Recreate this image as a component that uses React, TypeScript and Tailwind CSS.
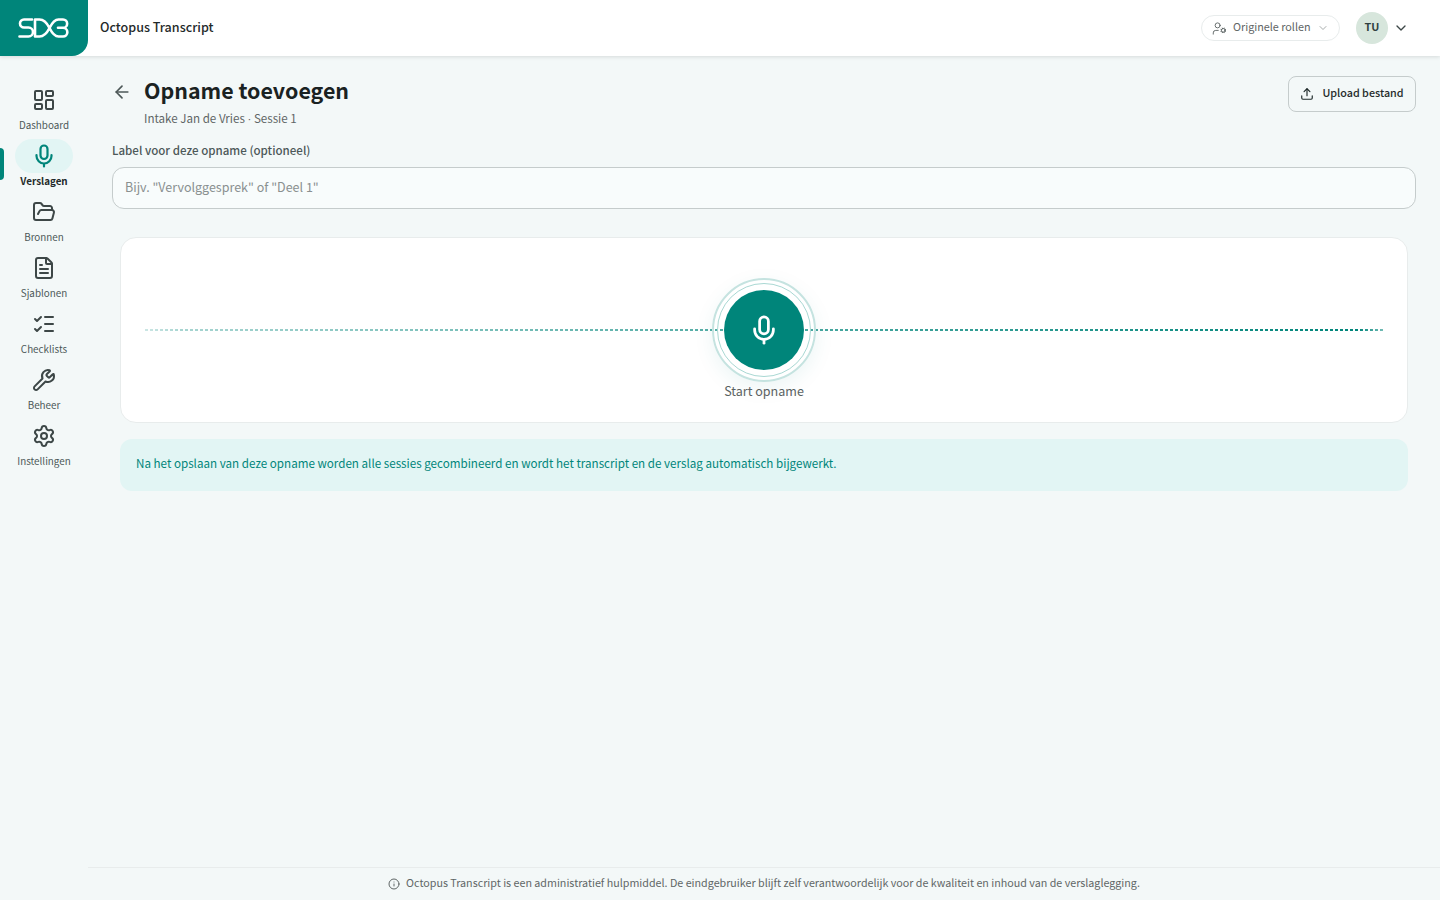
import {
  ArrowLeft,
  ChevronDown,
  FileText,
  FolderOpen,
  Info,
  LayoutDashboard,
  ListChecks,
  Settings,
  Upload,
  UserCog,
  Wrench,
} from "lucide-react";

function MicIcon({ size = 24, strokeWidth = 2.2 }: { size?: number; strokeWidth?: number }) {
  return (
    <svg width={size} height={size} viewBox="0 0 24 24" fill="none" stroke={"currentColor"} strokeWidth={strokeWidth} strokeLinecap="round" strokeLinejoin="round">
      <rect x="8.500" y="1.500" width="7" height="13.500" rx="3.500" />
      <path d="M4.500 11v1a7.500 7.500 0 0 0 15 0v-1" />
      <path d="M12 20v2.500" />
    </svg>
  );
}

const navItems = [
  { label: "Dashboard", icon: LayoutDashboard, stroke: 2 },
  { label: "Verslagen", icon: MicIcon, stroke: 2.2, active: true },
  { label: "Bronnen", icon: FolderOpen, stroke: 2 },
  { label: "Sjablonen", icon: FileText, stroke: 2 },
  { label: "Checklists", icon: ListChecks, stroke: 2 },
  { label: "Beheer", icon: Wrench, stroke: 2 },
  { label: "Instellingen", icon: Settings, stroke: 2 },
];

function Logo() {
  return (
    <svg width="52" height="22" viewBox="0 0 52 22" fill="none" stroke="white" strokeWidth="2.6" strokeLinecap="round" strokeLinejoin="round">
      <path d="M14 2.500H6a4 4 0 0 0 0 8h4.500a4.300 4.300 0 0 1 0 9H1.500" />
      <path d="M17 2.500v17h4.500c5 0 7.500-3.500 10-8.500s5-8.500 9-8.500h4.500a4 4 0 0 1 0 8.300h-5 5a4.300 4.300 0 0 1 0 8.700h-4.500c-4 0-6.500-3.500-9-8.500S26.500 2.500 21.500 2.500H17" />
    </svg>
  );
}

function Header() {
  return (
    <header className="relative z-10 flex h-14 items-center justify-between bg-white pr-[31px] shadow-[0_1px_4px_rgba(0,0,0,0.12)]">
      <div className="flex items-center">
        <div className="flex h-14 w-[88px] items-center justify-center rounded-br-2xl bg-[#00857a]">
          <Logo />
        </div>
        <span className="ml-3 pb-[2px] text-[12.55px] font-medium leading-4 text-[#1f2a2a]">Octopus Transcript</span>
      </div>
      <div className="flex items-center">
        <button className="flex h-[26px] w-[139px] items-center rounded-full border border-[#e8ecec] pl-[10px] text-[10.8px] leading-4 text-[#5f6666]">
          <UserCog size={15} strokeWidth={1.5} />
          <span className="ml-[6px] pb-[5px]">Originele rollen</span>
          <ChevronDown size={12} strokeWidth={1.5} className="ml-[6px] text-[#8a9090]" />
        </button>
        <div className="ml-4 flex h-8 w-8 items-center justify-center rounded-full bg-[#d7e6dc] pb-[3px] text-[10.8px] font-bold text-[#2f4040]">
          TU
        </div>
        <ChevronDown size={16} className="ml-[5px] text-[#3d4747]" />
      </div>
    </header>
  );
}

function Sidebar() {
  return (
    <aside className="relative flex w-[88px] shrink-0 flex-col items-center pt-[27px]">
      {navItems.map((item) => {
        const Icon = item.icon;
        return (
          <div key={item.label} className="relative flex h-14 w-[88px] flex-col items-center">
            {item.active && <div className="absolute left-0 top-[9px] h-8 w-1 rounded-r bg-[#00857a]" />}
            <div className={`flex h-[34px] w-[58px] items-center justify-center rounded-full ${item.active ? "bg-[#e2f5f4] text-[#00857a]" : "text-[#3d4747]"}`}>
              <Icon size={24} strokeWidth={item.stroke} />
            </div>
            <span className={`text-[9.85px] leading-[16px] ${item.active ? "font-bold text-[#1f2a2a]" : "text-[#4d5858]"}`}>
              {item.label}
            </span>
          </div>
        );
      })}
    </aside>
  );
}

function Recorder() {
  return (
    <section className="relative mx-2 mt-7 flex h-[186px] flex-col items-center rounded-2xl border border-[#e8ecec] bg-white pt-[40px]">
      <svg className="absolute left-6 top-[91px]" width="1238" height="2" viewBox="0 0 1238 2">
        <defs>
          <linearGradient id="wave" x1="0" x2="1" y1="0" y2="0">
            <stop offset="0" stopColor="#00857a" stopOpacity="0.2" />
            <stop offset="0.03" stopColor="#00857a" stopOpacity="0.35" />
            <stop offset="0.5" stopColor="#00857a" stopOpacity="0.7" />
            <stop offset="0.98" stopColor="#00857a" stopOpacity="1" />
            <stop offset="1" stopColor="#00857a" stopOpacity="0.55" />
          </linearGradient>
          <mask id="dots" maskUnits="userSpaceOnUse" x="0" y="0" width="1238" height="2">
            <line x1="0" y1="1" x2="1238" y2="1" stroke="white" strokeWidth="2" strokeDasharray="3 2" />
          </mask>
        </defs>
        <rect width="1238" height="2" fill="url(#wave)" mask="url(#dots)" />
      </svg>
      <div className="relative flex h-[104px] w-[104px] items-center justify-center rounded-full border-2 border-[#c5e3e0] shadow-[0_6px_20px_rgba(0,133,122,0.08)]">
        <div className="flex h-[94px] w-[94px] items-center justify-center rounded-full border border-[#a9d8d3]">
          <button className="flex h-20 w-20 items-center justify-center rounded-full bg-[#00857a] text-white">
            <MicIcon size={30} strokeWidth={2.2} />
          </button>
        </div>
      </div>
      <span className="relative -mt-[1px] text-[12.55px] font-normal leading-5 text-[#5a6262]">Start opname</span>
    </section>
  );
}

export default function App() {
  return (
    <div className="flex min-h-screen flex-col bg-[#f3f8f8] font-['Noto_Sans_CJK_JP','Noto_Sans',sans-serif]">
      <Header />
      <div className="flex flex-1">
        <Sidebar />
        <div className="flex min-w-0 flex-1 flex-col">
          <main className="flex-1 px-6 pt-5">
            <div className="flex items-start justify-between">
              <div className="flex items-start">
                <ArrowLeft size={20} className="mt-[6px] text-[#4d5858]" />
                <div className="ml-3 -mt-[2px]">
                  <h1 className="text-[21.4px] font-bold leading-8 text-[#1a2222]">Opname toevoegen</h1>
                  <p className="mt-[2px] text-[11.6px] leading-5 text-[#5f6666]">
                    Intake Jan de Vries <span className="font-['Liberation_Sans',sans-serif]">·</span> Sessie 1
                  </p>
                </div>
              </div>
              <button className="flex h-9 w-32 items-center justify-center gap-2 rounded-lg border border-[#c5cccc] pb-[1px] text-[10.75px] font-medium text-[#1f2a2a]">
                <Upload size={14} />
                Upload bestand
              </button>
            </div>
            <label className="mt-[11px] block text-[11.55px] font-medium leading-5 text-[#4d5858]">Label voor deze opname (optioneel)</label>
            <input
              placeholder={'Bijv. "Vervolggesprek" of "Deel 1"'}
              className="mt-[7px] block h-[42px] w-full rounded-xl border border-[#c5cccc] bg-[#f8fcfc] px-3 pb-[3px] text-[12.5px] text-[#1f2a2a] placeholder:text-[#8a9090]"
            />
            <Recorder />
            <div className="mx-2 mt-4 flex h-[52px] items-center rounded-xl bg-[#e2f5f4] px-4 pb-[4px] text-[11.64px] text-[#00857a]">
              Na het opslaan van deze opname worden alle sessies gecombineerd en wordt het transcript en de verslag automatisch bijgewerkt.
            </div>
          </main>
          <footer className="flex h-[33px] items-center justify-center gap-[6px] border-t border-[#e8ecec] text-[10.73px] text-[#5f6666]">
            <Info size={12} />
            <span className="pb-[2px]">
              Octopus Transcript is een administratief hulpmiddel. De eindgebruiker blijft zelf verantwoordelijk voor de kwaliteit en inhoud van de verslaglegging.
            </span>
          </footer>
        </div>
      </div>
    </div>
  );
}
